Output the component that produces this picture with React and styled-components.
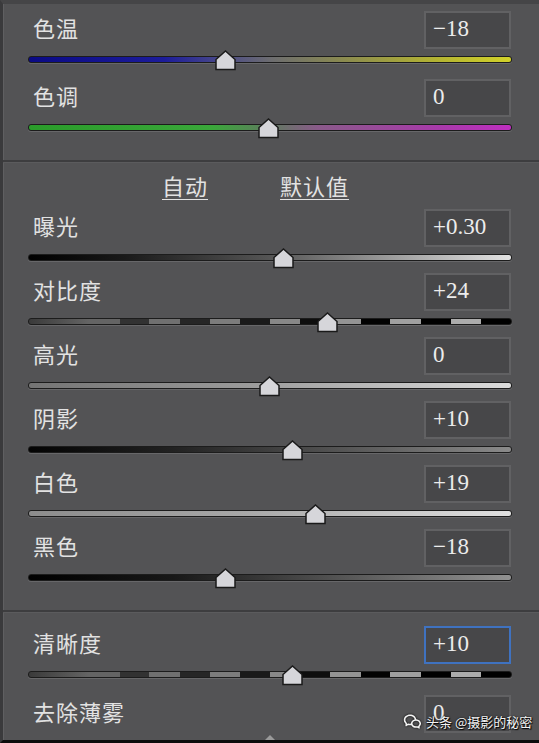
import React from 'react';
import styled, { createGlobalStyle } from 'styled-components';
import { RiWechatLine } from 'react-icons/ri';

const GlobalStyle = createGlobalStyle`
    html, body {
        margin: 0;
        padding: 0;
        background: #535355;
    }
    body {
        font-family: "Noto Sans CJK SC", "Noto Sans", sans-serif;
    }
`;

// stripes that grow in contrast from left to right, like the contrast / clarity tracks
const stripes = (() => {
    const stops = [];
    const n = 16;
    for (let i = 0; i < n; i++) {
        const t = i / (n - 1);
        const base = 78;
        const amp = Math.round(10 + t * 90);
        const c = i % 2 === 0 ? base + amp : Math.max(0, base - amp);
        const v = Math.min(200, c);
        const from = ((i / n) * 100).toFixed(1);
        const to = (((i + 1) / n) * 100).toFixed(1);
        stops.push(`rgb(${v},${v},${v}) ${from}%`, `rgb(${v},${v},${v}) ${to}%`);
    }
    return `linear-gradient(to right, #3a3a3a 0%, ${stops.slice(4).join(', ')})`;
})();

const tracks = {
    temp: 'linear-gradient(to right, #0a0a84 0%, #1c1c9a 28%, #4a4a88 40%, #6c6c70 50%, #8a8a50 65%, #b4b432 85%, #d2d22a 100%)',
    tint: 'linear-gradient(to right, #2a9c2a 0%, #3aa83a 38%, #5f7a5f 50%, #8a5a8a 60%, #a83aaa 85%, #bf2fc0 100%)',
    exposure: 'linear-gradient(to right, #000 0%, #1a1a1a 20%, #555 50%, #aaa 80%, #e2e2e2 100%)',
    stripes,
    highlights: 'linear-gradient(to right, #747474 0%, #9a9a9a 45%, #dcdcdc 100%)',
    shadows: 'linear-gradient(to right, #030303 0%, #222 30%, #555 65%, #8a8a8a 100%)',
    whites: 'linear-gradient(to right, #8c8c8c 0%, #a8a8a8 45%, #e0e0e0 100%)',
    blacks: 'linear-gradient(to right, #000 0%, #181818 30%, #555 65%, #929292 100%)',
};

const Panel = styled.div`
    position: relative;
    width: 539px;
    height: 743px;
    box-sizing: border-box;
    overflow: hidden;
    background: #535355;
    border-top: 4px solid #454547;
    border-left: 3px solid #3a3a3c;
    border-bottom: 3px solid #0c0c0c;
    box-shadow: inset 1px 0 0 #5f5f61;
`;

const Section = styled.div`
    display: flex;
    flex-direction: column;
    gap: ${(p) => p.$gap || 0}px;
    padding: ${(p) => p.$top || 0}px 27px 0 25px;
`;

const Divider = styled.div`
    height: 2px;
    margin: ${(p) => p.$above}px -15px ${(p) => p.$below}px -11px;
    background: #3d3d3f;
    box-shadow: 0 1px 0 #5b5b5d;
`;

const Row = styled.div`
    display: flex;
    flex-direction: column;
`;

const Header = styled.div`
    height: 38px;
    display: flex;
    align-items: center;
    justify-content: space-between;
`;

const Label = styled.span`
    padding: 0 0 6px 5px;
    font-size: 22px;
    color: #e2e2e2;
    letter-spacing: 1px;
`;

const ValueBox = styled.div`
    box-sizing: border-box;
    width: 87px;
    height: 38px;
    margin-right: 1px;
    padding: 0 0 2px 7px;
    display: flex;
    align-items: center;
    background: #474749;
    border: 2px solid ${(p) => (p.$focused ? '#3f72c0' : '#616163')};
    font-family: "Liberation Serif", serif;
    font-size: 23px;
    color: #ececec;
`;

const Slider = styled.div`
    position: relative;
    height: 26px;
`;

const Track = styled.div`
    box-sizing: border-box;
    margin-top: 7px;
    height: 7px;
    border: 1.5px solid #1c1c1c;
    border-radius: 3px;
    background: ${(p) => tracks[p.$kind]};
    box-shadow: 0 1px 0 rgba(255, 255, 255, 0.12);
`;

const Thumb = styled.svg`
    position: absolute;
    top: 1px;
    width: 21px;
    height: 21px;
`;

const Actions = styled.div`
    height: 47px;
    display: flex;
    align-items: center;
    gap: 72px;
    padding-left: 134px;
    padding-bottom: 1px;
    box-sizing: border-box;
`;

const Action = styled.span`
    font-size: 22px;
    color: #e2e2e2;
    letter-spacing: 1px;
    text-decoration: underline;
    text-underline-offset: 4px;
    text-decoration-thickness: 1px;
`;

const Caret = styled.div`
    position: absolute;
    left: 262px;
    bottom: 0;
    width: 0;
    height: 0;
    border-left: 5px solid transparent;
    border-right: 5px solid transparent;
    border-bottom: 5px solid #9a9a9a;
`;

const Watermark = styled.div`
    position: absolute;
    left: 400px;
    top: 708px;
    display: flex;
    align-items: center;
    gap: 4px;
    font-size: 13px;
    color: #f4f4f4;
    text-shadow: 0 0 2px #000, 1px 1px 1px #000;
    white-space: nowrap;
    svg {
        width: 19px;
        height: 19px;
        filter: drop-shadow(0 0 1px #000);
    }
`;

const SliderRow = ({ label, value, kind, pos, focused }) => (
    <Row>
        <Header>
            <Label>{label}</Label>
            <ValueBox $focused={focused}>{value}</ValueBox>
        </Header>
        <Slider>
            <Track $kind={kind} />
            {pos != null && (
                <Thumb viewBox="0 0 21 21" style={{ left: `calc(${pos * 100}% - 10.5px)` }}>
                    <polygon
                        points="10.5,1 20,9.5 20,19.5 1,19.5 1,9.5"
                        fill="#d6d6da"
                        stroke="#1a1a1a"
                        strokeWidth="1.5"
                    />
                </Thumb>
            )}
        </Slider>
    </Row>
);

const App = () => {
    return (
        <Panel>
            <GlobalStyle />
            <Section $top={7} $gap={4}>
                <SliderRow label="色温" value="−18" kind="temp" pos={0.409} />
                <SliderRow label="色调" value="0" kind="tint" pos={0.496} />
            </Section>
            <Divider $above={17} $below={0} />
            <Section>
                <Actions>
                    <Action>自动</Action>
                    <Action>默认值</Action>
                </Actions>
                <SliderRow label="曝光" value="+0.30" kind="exposure" pos={0.527} />
                <SliderRow label="对比度" value="+24" kind="stripes" pos={0.618} />
                <SliderRow label="高光" value="0" kind="highlights" pos={0.498} />
                <SliderRow label="阴影" value="+10" kind="shadows" pos={0.547} />
                <SliderRow label="白色" value="+19" kind="whites" pos={0.593} />
                <SliderRow label="黑色" value="−18" kind="blacks" pos={0.409} />
            </Section>
            <Divider $above={17} $below={14} />
            <Section $gap={5}>
                <SliderRow label="清晰度" value="+10" kind="stripes" pos={0.547} focused />
                <SliderRow label="去除薄雾" value="0" kind="stripes" />
            </Section>
            <Caret />
            <Watermark>
                <RiWechatLine />
                <span>头条 @摄影的秘密</span>
            </Watermark>
        </Panel>
    );
};

export default App;
